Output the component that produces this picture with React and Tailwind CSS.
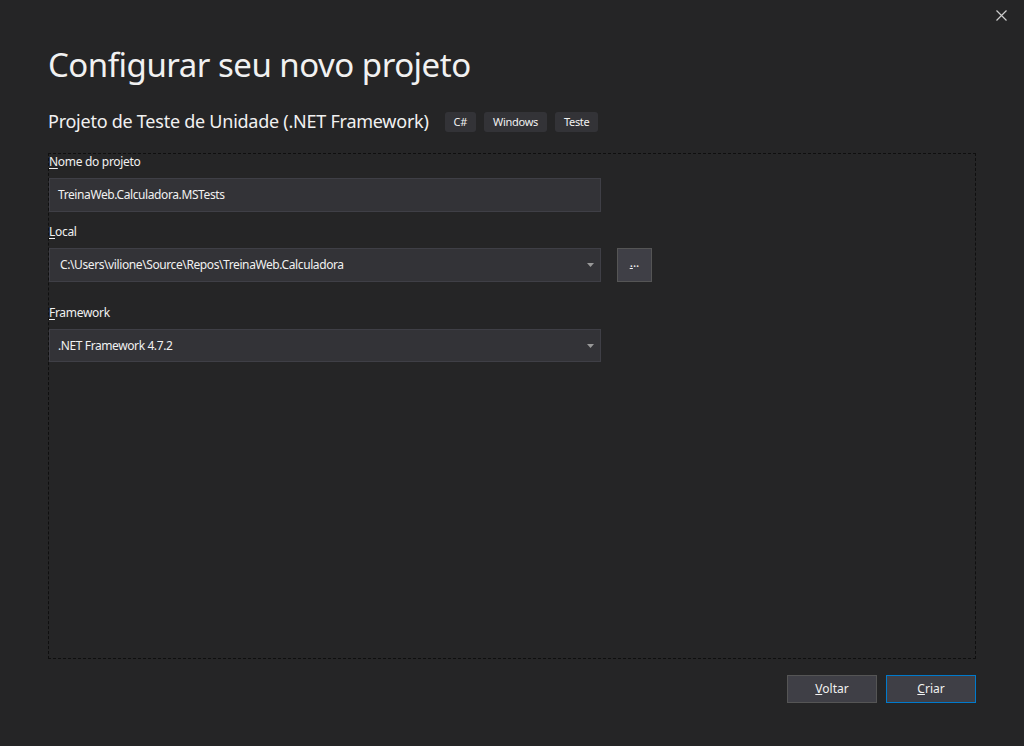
import React from "react";

const font = { fontFamily: '"Noto Sans", "Open Sans", sans-serif' };

function Label({ first, rest }) {
  return (
    <div className="text-[12px] leading-[16px] text-[#f1f1f1] mb-[8px] tracking-[-0.3px]">
      <span className="underline underline-offset-2">{first}</span>
      {rest}
    </div>
  );
}

function Arrow() {
  return (
    <svg width="7" height="4" viewBox="0 0 7 4" className="mr-[6px]">
      <path d="M0 0 H7 L3.5 4 Z" fill="#999999" />
    </svg>
  );
}

function Tag({ children }) {
  return (
    <div className="h-[20px] px-[9px] rounded-[3px] bg-[#333337] text-[11px] tracking-[-0.3px] text-[#f1f1f1] flex items-center">
      {children}
    </div>
  );
}

export default function App() {
  return (
    <div
      className="w-[1024px] h-[746px] bg-[#252526] text-[#f1f1f1] flex flex-col overflow-hidden"
      style={font}
    >
      <div className="flex justify-end h-[32px] pr-[17px] pt-[10px]">
        <svg width="11" height="11" viewBox="0 0 11 11">
          <path d="M0.5 0.5 L10.5 10.5 M10.5 0.5 L0.5 10.5" stroke="#cccccc" strokeWidth="1.2" />
        </svg>
      </div>
      <div className="pl-[48px] pr-[48px] flex flex-col">
        <h1 className="text-[33px] leading-[40px] font-normal mt-[13px] tracking-[-0.5px]">
          Configurar seu novo projeto
        </h1>
        <div className="flex items-center mt-[24px] h-[24px]">
          <div className="text-[18px] leading-[24px] mr-[16px] tracking-[-0.25px]">
            Projeto de Teste de Unidade (.NET Framework)
          </div>
          <div className="flex gap-[8px] mt-[2px]">
            <Tag>C#</Tag>
            <Tag>Windows</Tag>
            <Tag>Teste</Tag>
          </div>
        </div>
        <div className="mt-[20px] h-[506px] border border-dashed border-[#0f0f0f] flex flex-col">
          <Label first="N" rest="ome do projeto" />
          <div className="w-[552px] h-[34px] bg-[#333337] border border-[#3f3f46] flex items-center px-[8px] text-[12px] tracking-[-0.4px]">
            TreinaWeb.Calculadora.MSTests
          </div>
          <div className="mt-[12px]">
            <Label first="L" rest="ocal" />
          </div>
          <div className="flex items-center">
            <div className="w-[552px] h-[34px] bg-[#333337] border border-[#3f3f46] flex items-center justify-between pl-[10px] text-[12px] tracking-[-0.4px]">
              <span>C:\Users\vilione\Source\Repos\TreinaWeb.Calculadora</span>
              <Arrow />
            </div>
            <div className="ml-[16px] w-[35px] h-[34px] bg-[#3f3f46] border border-[#555555] flex items-center justify-center text-[12px]">
              <span className="-mt-[4px]">
                <span className="underline">.</span>..
              </span>
            </div>
          </div>
          <div className="mt-[23px]">
            <Label first="F" rest="ramework" />
          </div>
          <div className="w-[552px] h-[33px] bg-[#333337] border border-[#3f3f46] flex items-center justify-between pl-[8px] text-[12px] tracking-[-0.4px]">
            <span>.NET Framework 4.7.2</span>
            <Arrow />
          </div>
        </div>
        <div className="flex justify-end gap-[9px] mt-[16px]">
          <div className="w-[90px] h-[28px] bg-[#3f3f46] border border-[#555555] flex items-center justify-center text-[12px]">
            <span>
              <span className="underline">V</span>oltar
            </span>
          </div>
          <div className="w-[90px] h-[28px] bg-[#3f3f46] border border-[#007acc] flex items-center justify-center text-[12px]">
            <span>
              <span className="underline">C</span>riar
            </span>
          </div>
        </div>
      </div>
    </div>
  );
}
